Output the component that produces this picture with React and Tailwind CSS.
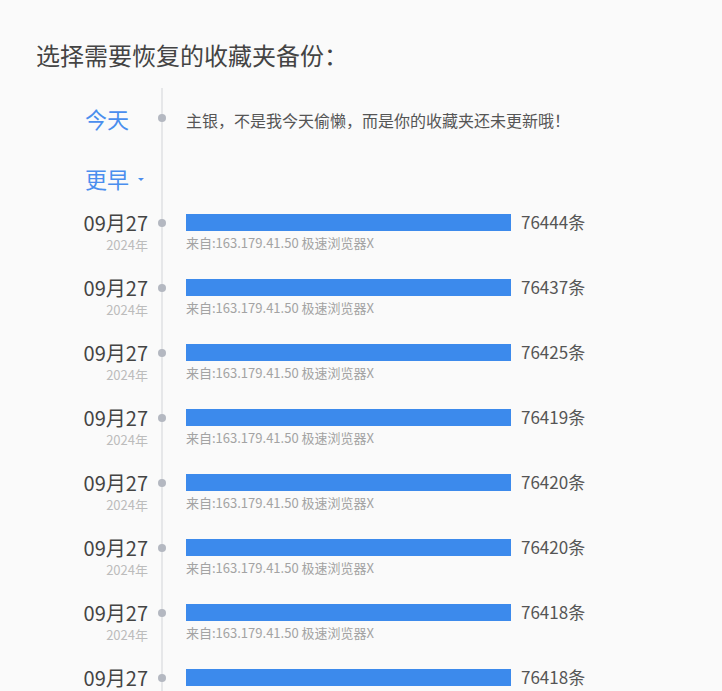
import React from "react";

const rows = [76444, 76437, 76425, 76419, 76420, 76420, 76418, 76418];

const Rail = ({ dotTop }) => {
	// vertical timeline line + dot for one row
	return (
		<div className="w-[38px] shrink-0 relative">
			<div className="absolute left-[13px] top-0 bottom-0 w-[2px] bg-[#e6e7e9]"></div>
			{dotTop !== undefined && (
				<div className="absolute left-[10px] w-[8px] h-[8px] rounded-full bg-[#b4b8c1]" style={{ top: dotTop }}></div>
			)}
		</div>
	);
};

const BackupRow = ({ count }) => {
	return (
		<div className="flex h-[65px]">
			<div className="w-[148px] shrink-0 flex flex-col items-end pt-[12px]">
				<span className="text-[20px] leading-[24px] text-[#444]">09月27</span>
				<span className="text-[13px] leading-[16px] text-[#bcbcbc] mt-[2px]">2024年</span>
			</div>
			<Rail dotTop={20} />
			<div className="flex flex-col pt-[15px]">
				<div className="flex items-center">
					<div className="w-[325px] h-[17px] bg-[#3c8aec]"></div>
					<span className="ml-[10px] text-[17px] leading-[17px] text-[#555] -mt-[2px]">{count}条</span>
				</div>
				<span className="text-[13px] leading-[16px] text-[#a3a3a3] mt-[4px]">来自:163.179.41.50 极速浏览器X</span>
			</div>
		</div>
	);
};

export default function App() {
	return (
		<div className="min-h-[691px] bg-[#fafafa] overflow-hidden" style={{ fontFamily: '"Noto Sans CJK SC", "Noto Sans", sans-serif' }}>
			<div className="pt-[38px] pl-[36px] h-[88px]">
				<h1 className="text-[24px] leading-[34px] text-[#444]">选择需要恢复的收藏夹备份：</h1>
			</div>

			<div className="flex h-[60px]">
				<div className="w-[148px] shrink-0 pl-[85px] pt-[15px]">
					<span className="text-[22px] leading-[30px] text-[#4a8eee]">今天</span>
				</div>
				<Rail dotTop={26} />
				<div className="pt-[20px]">
					<span className="text-[16px] leading-[20px] text-[#555]">主银，不是我今天偷懒，而是你的收藏夹还未更新哦！</span>
				</div>
			</div>

			<div className="flex h-[51px]">
				<div className="w-[148px] shrink-0 pl-[85px] pt-[15px]">
					<div className="flex items-center h-[30px]">
						<span className="text-[22px] leading-[30px] text-[#4a8eee]">更早</span>
						<span className="ml-[9px] mt-[3px] w-0 h-0 border-l-[3px] border-r-[3px] border-t-[3px] border-l-transparent border-r-transparent border-t-[#4a8eee]"></span>
					</div>
				</div>
				<Rail />
			</div>

			{rows.map((count, index) => {
				return <BackupRow count={count} key={index}></BackupRow>;
			})}
		</div>
	);
}
